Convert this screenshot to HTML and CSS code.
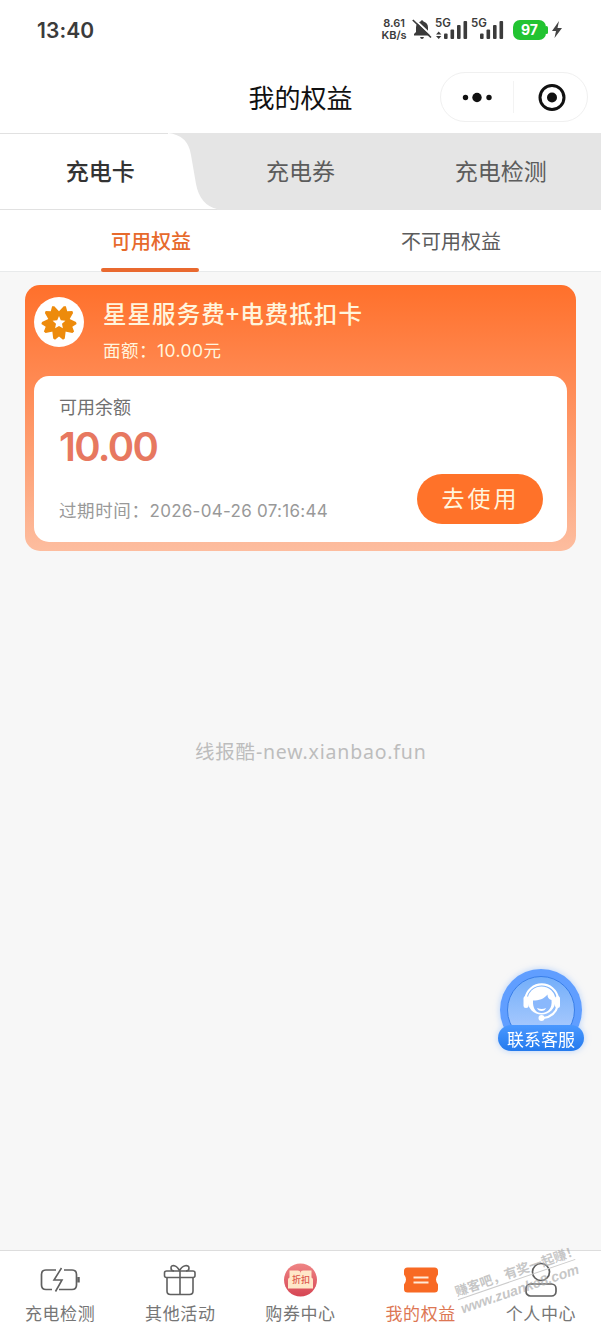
FILE: index.html
```html
<!DOCTYPE html>
<html lang="zh-CN">
<head>
<meta charset="utf-8">
<title>我的权益</title>
<link rel="stylesheet" href="styles.css">
</head>
<body>
<div class="app">
  <header class="status">
    <span class="clock">13:40</span>
    <div class="status-right">
      <div class="speed"><span>8.61</span><span>KB/s</span></div>
      <svg class="bell" width="20" height="22" viewBox="0 0 20 22"><path d="M2 17.500V16l2-2V9.500C4 6 6 4 8.500 3.500Q10 1 11.500 3.500C14.500 4.500 16 6.500 16 9.500V14l2 2v1.500zM8 19h4q-.5 2-2 2t-2-2z" fill="#3b3b3b"/><path d="M2.500 1.200 20 17.800" stroke="#fff" stroke-width="2"/><path d="M.8 2 19 19.500" stroke="#3b3b3b" stroke-width="1.700"/></svg>
      <div class="signal"><b>5G</b><svg width="32" height="20" viewBox="0 0 32 20"><path d="M0 14.500 2.700 11.500 5.400 14.500zM0 16h5.400L2.700 19z"/><rect x="8" y="13.500" width="3.600" height="5.500" rx="1"/><rect x="14.500" y="9.500" width="3.600" height="9.500" rx="1"/><rect x="21" y="5" width="3.600" height="14" rx="1"/><rect x="27.500" y="1" width="3.600" height="18" rx="1"/></svg></div>
      <div class="signal second"><b>5G</b><svg width="32" height="20" viewBox="0 0 32 20"><rect x="8" y="13.500" width="3.600" height="5.500" rx="1"/><rect x="14.500" y="9.500" width="3.600" height="9.500" rx="1"/><rect x="21" y="5" width="3.600" height="14" rx="1"/><rect x="27.500" y="1" width="3.600" height="18" rx="1"/></svg></div>
      <div class="battery">97</div>
      <svg class="bolt" width="10" height="18" viewBox="0 0 10 18"><path d="M7 0 0 10h4L2.500 17 10 7H5.500z" fill="#444"/></svg>
    </div>
  </header>
  <div class="titlebar">
    <h1>我的权益</h1>
    <div class="capsule">
      <svg width="146" height="48" viewBox="0 0 146 48"><circle cx="24.500" cy="24.500" r="2.700"/><circle cx="36" cy="24.500" r="4.700"/><circle cx="48" cy="24.500" r="2.700"/><path d="M72.500 8v32" stroke="#f3f3f3"/><circle cx="111" cy="24.500" r="12" fill="none" stroke="#111" stroke-width="3"/><circle cx="111" cy="24.500" r="5"/></svg>
    </div>
  </div>
  <nav class="tabs">
    <svg class="tab-bg" width="218" height="77" viewBox="0 0 218 77"><path d="M0 0H168Q188 2 191 22L196 51Q200 72 217 76V77H0z" fill="#fff"/><path d="M0 .5h168M0 76.500h217" stroke="#e1e1e1"/></svg>
    <span class="active">充电卡</span><span>充电券</span><span>充电检测</span>
  </nav>
  <nav class="subtabs"><span class="active">可用权益</span><span>不可用权益</span></nav>
  <main>
    <section class="card">
      <div class="card-head">
        <svg width="50" height="50" viewBox="0 0 50 50"><circle cx="25" cy="25" r="25" fill="#fff"/><g fill="#ed8b0c"><path d="M25 26 18.300 17 19.200 9.500 21 8.300 25 11.500 29 8.300 30.800 9.500 31.700 17z" transform="rotate(36 25 25.500)"/><path d="M25 26 18.300 17 19.200 9.500 21 8.300 25 11.500 29 8.300 30.800 9.500 31.700 17z" transform="rotate(108 25 25.500)"/><path d="M25 26 18.300 17 19.200 9.500 21 8.300 25 11.500 29 8.300 30.800 9.500 31.700 17z" transform="rotate(180 25 25.500)"/><path d="M25 26 18.300 17 19.200 9.500 21 8.300 25 11.500 29 8.300 30.800 9.500 31.700 17z" transform="rotate(252 25 25.500)"/><path d="M25 26 18.300 17 19.200 9.500 21 8.300 25 11.500 29 8.300 30.800 9.500 31.700 17z" transform="rotate(324 25 25.500)"/></g><path d="m25 19 1.800 4.200 4.600.5-3.400 3 .9 4.500-3.900-2.200-3.900 2.200.9-4.500-3.400-3 4.600-.5z" fill="#fff"/></svg>
        <div class="card-name"><h2>星星服务费+电费抵扣卡</h2><p>面额：<i>10.00</i>元</p></div>
      </div>
      <div class="card-body">
        <div class="label">可用余额</div>
        <div class="amount">10.00</div>
        <div class="expiry">过期时间：<i>2026-04-26 07:16:44</i></div>
        <button class="use">去使用</button>
      </div>
    </section>
    <div class="site">线报酷-new.xianbao.fun</div>
    <div class="service">
      <svg width="92" height="92" viewBox="0 0 92 92">
        <defs><linearGradient id="sg" x1="0" y1="0" x2="0" y2="1"><stop stop-color="#73aef9"/><stop offset="1" stop-color="#b5d0ff"/></linearGradient><linearGradient id="lb" x1="0" y1="0" x2="0" y2="1"><stop stop-color="#4a98ff"/><stop offset="1" stop-color="#247aed"/></linearGradient></defs>
        <circle cx="46" cy="45" r="41" fill="#609eff"/><circle cx="46" cy="45" r="33.500" fill="url(#sg)" stroke="#397fe9"/>
        <circle cx="46.500" cy="35.500" r="14" fill="#fff"/><path d="M38 35.500c6 0 11-1.500 14.500-6 0 3 1 4.500 4 5.500 1 8-3.500 13-10 13-5.500 0-9-4.500-8.500-12.500z" fill="#8ab8fc"/><path d="M42 43q5 2 9 0-1 3-4.500 3T42 43z" fill="#fff"/>
        <path d="M30.500 33a16.500 16.500 0 0 1 32.500 0M63 40q-3 11.500-14.500 13" fill="none" stroke="#fff" stroke-width="2.200"/><rect x="28.500" y="31" width="5" height="12" rx="2.500" fill="#fff"/><rect x="60" y="31" width="5" height="12" rx="2.500" fill="#fff"/><circle cx="46.500" cy="53" r="3" fill="#fff"/>
        <rect x="3" y="60" width="86" height="26" rx="13" fill="url(#lb)"/>
      </svg>
      <span>联系客服</span>
    </div>
  </main>
  <footer class="tabbar">
    <div class="item"><svg width="42" height="36" viewBox="0 0 42 36" fill="none" stroke="#606060" stroke-width="1.700"><path d="M17 8H7Q2.500 8 2.500 12.500V23Q2.500 27.500 7 27.500h6M25 8h8q4.500 0 4.500 4.500V23q0 4.500-4.500 4.500H20"/><path d="m22.500 6-7.500 12h8l-6.500 11.500" stroke-width="1.600"/><path d="M39.500 15v5.500" stroke-width="2.500"/></svg><span>充电检测</span></div>
    <div class="item"><svg width="42" height="36" viewBox="0 0 42 36" fill="none" stroke="#606060" stroke-width="1.600"><rect x="5.500" y="9" width="30.500" height="6.500" rx="2"/><path d="M8 15.500V29q0 3.500 3.500 3.500h19q3.500 0 3.500-3.500V15.500M21 9v23.500M20.500 9C18 3 12 2 12 6q0 3 3 3M20.500 9C23 3 30 2 30 6q0 3-3 3"/></svg><span>其他活动</span></div>
    <div class="item discount"><svg width="42" height="36" viewBox="0 0 42 36"><defs><linearGradient id="red" x1="0" y1="0" x2="0" y2="1"><stop stop-color="#ef8585"/><stop offset="1" stop-color="#d64553"/></linearGradient></defs><circle cx="21.500" cy="18" r="16.500" fill="url(#red)"/><path d="M10.500 8.500h8.500q2.500 0 2.500 3 0-3 2.500-3h8.500v7q2 1 1.500 3v8H9v-8q-.5-2 1.500-3z" fill="#ffe6c8"/></svg><b>折扣</b><span>购券中心</span></div>
    <div class="item current"><svg width="42" height="36" viewBox="0 0 42 36"><path d="M7.500 5.500h27Q38 5.500 38 9v3.500q-4 5 0 10V27q0 3.500-3.500 3.500h-27Q4 30.500 4 27v-4.500q4-5 0-10V9q0-3.500 3.500-3.500z" fill="#f86923"/><path d="M13.500 15.500h15M13.500 20.500h15" stroke="#ffead8" stroke-width="1.800"/></svg><span>我的权益</span></div>
    <div class="item"><svg width="42" height="36" viewBox="0 0 42 36" fill="none" stroke="#606060" stroke-width="1.700"><circle cx="21" cy="10" r="8.500"/><rect x="6" y="22" width="30" height="12" rx="4.500"/></svg><span>个人中心</span></div>
    <div class="stamp"><div>赚客吧，有奖一起赚！</div><div class="url">www.zuanke8.com</div></div>
  </footer>
</div>
</body>
</html>
```
FILE: styles.css
```css
* { box-sizing: border-box; }
body { margin: 0; font-family: "Noto Sans CJK SC", sans-serif; color: #5c5c5c; }
h1, h2, p { margin: 0; }
i { font-style: normal; }
svg { display: block; flex: none; }
.app { width: 601px; height: 1334px; display: flex; flex-direction: column; background: #f7f7f7; overflow: hidden; position: relative; }
.status { height: 60px; background: #fff; display: flex; justify-content: space-between; padding: 0 39px 0 37px; }
.clock { font: 600 21px/61px Inter, sans-serif; color: #3b3b3b; letter-spacing: .1px; }
.status-right { display: flex; align-items: flex-start; padding-top: 18px; }
.speed { width: 26px; margin-right: 5px; display: flex; flex-direction: column; align-items: center; font: 600 11px/12px Inter, sans-serif; color: #3b3b3b; margin-top: -1px; white-space: nowrap; }
.speed span + span { line-height: 13px; }
.signal { width: 33px; height: 24px; position: relative; fill: #3b3b3b; padding-top: 2px; margin-left: 5px; }
.bell + .signal { margin-left: 4px; }
.signal.second { margin-left: 3px; }
.signal b { position: absolute; left: -1px; top: -1px; font: 600 11.500px/12px Inter, sans-serif; color: #3b3b3b; }
.battery { width: 33px; height: 20px; border-radius: 7px; background: #22c331; color: #fff; font: 700 14px/20px Inter, sans-serif; text-align: center; margin: 2px 6px 0 8px; position: relative; }
.battery::after { content: ""; position: absolute; right: -2px; top: 6px; width: 3px; height: 8px; border-radius: 2px; background: #22c331; }
.bolt { margin-top: 3px; }
.titlebar { height: 73px; background: #fff; position: relative; }
.titlebar h1 { font-size: 26px; font-weight: 400; line-height: 73px; text-align: center; color: #111; }
.capsule { position: absolute; right: 13px; top: 12px; width: 148px; height: 50px; border: 1px solid #f0f0f0; border-radius: 25px; fill: #111; }
.tabs { height: 77px; background: #e5e5e5; display: grid; grid-template-columns: repeat(3, 1fr); position: relative; text-align: center; font-size: 23px; line-height: 74px; }
.tab-bg { position: absolute; left: 0; top: 0; }
.tabs span { position: relative; }
.tabs .active { color: #333; font-weight: 500; }
.subtabs { height: 62px; background: #fff; border-bottom: 1px solid #e8eaeb; display: grid; grid-template-columns: 1fr 1fr; text-align: center; font-size: 20px; line-height: 61px; padding-left: 1px; }
.subtabs .active { color: #e76a2c; font-weight: 500; position: relative; }
.subtabs .active::after { content: ""; position: absolute; left: 100px; bottom: -1px; width: 98px; height: 4px; border-radius: 2px; background: #e9692f; }
main { flex: 1; padding: 13px 25px 0; }
.card { height: 266px; border-radius: 15px; padding: 0 9px 9px; background: linear-gradient(#ff702b 0, #ff8b55 38%, #fdbd9f 100%); display: flex; flex-direction: column; }
.card-head { height: 91px; display: flex; gap: 19px; padding-top: 12px; color: #fff5dd; }
.card-name h2 { font-size: 23.500px; font-weight: 500; line-height: 32px; letter-spacing: 1.050px; }
.card-name p { font-size: 17.500px; line-height: 24px; letter-spacing: .5px; margin-top: 9px; }
.card-name i { font: 17.500px Inter, sans-serif; letter-spacing: .4px; }
.card-body { flex: 1; position: relative; background: #fff; border-radius: 15px; padding: 17px 25px; }
.label { font-size: 18px; line-height: 26px; color: #707070; }
.amount { font: 600 40px/50px Inter, sans-serif; letter-spacing: -1.700px; color: #e77860; margin-top: 3px; }
.expiry { font-size: 17.500px; line-height: 26px; letter-spacing: .6px; color: #999; margin-top: 25px; }
.expiry i { font: 17px Inter, sans-serif; letter-spacing: .28px; }
.use { position: absolute; right: 24px; bottom: 18px; width: 126px; height: 50px; padding: 0 0 3px 1px; border: 0; border-radius: 25px; background: #ff7229; color: #fff5dd; font: 23px/47px "Noto Sans CJK SC", sans-serif; letter-spacing: 3px; }
.site { font: 19.500px/28px "Noto Sans", "Noto Sans CJK SC", sans-serif; letter-spacing: .8px; color: #bdbdbd; margin: 187px 0 0 170px; white-space: nowrap; }
.service { position: absolute; right: 14px; top: 965px; filter: drop-shadow(0 0 3px #70aaff80); }
.service span { position: absolute; left: 0; right: 0; top: 61px; text-align: center; color: #fff; font-size: 17px; line-height: 25px; }
.tabbar { height: 84px; background: #fff; border-top: 1px solid #ddd; display: grid; grid-template-columns: repeat(5, 1fr); position: relative; }
.item { display: flex; flex-direction: column; align-items: center; padding-top: 11px; position: relative; font-size: 17px; line-height: 26px; letter-spacing: .6px; color: #767676; gap: 2px; }
.item.current { color: #dd7754; }
.discount b { position: absolute; left: 1px; right: 0; top: 20px; text-align: center; font-size: 9px; line-height: 18px; letter-spacing: 0; font-weight: 500; color: #dd594e; }
.stamp { position: absolute; left: 455px; top: 11px; width: 124px; transform: rotate(-19deg); color: #a9a9a9aa; font-size: 13px; line-height: 17px; font-weight: 700; white-space: nowrap; }
.stamp .url { font: italic 700 14px/19px "Liberation Sans", sans-serif; border-top: 1px solid #ccc; }
```
